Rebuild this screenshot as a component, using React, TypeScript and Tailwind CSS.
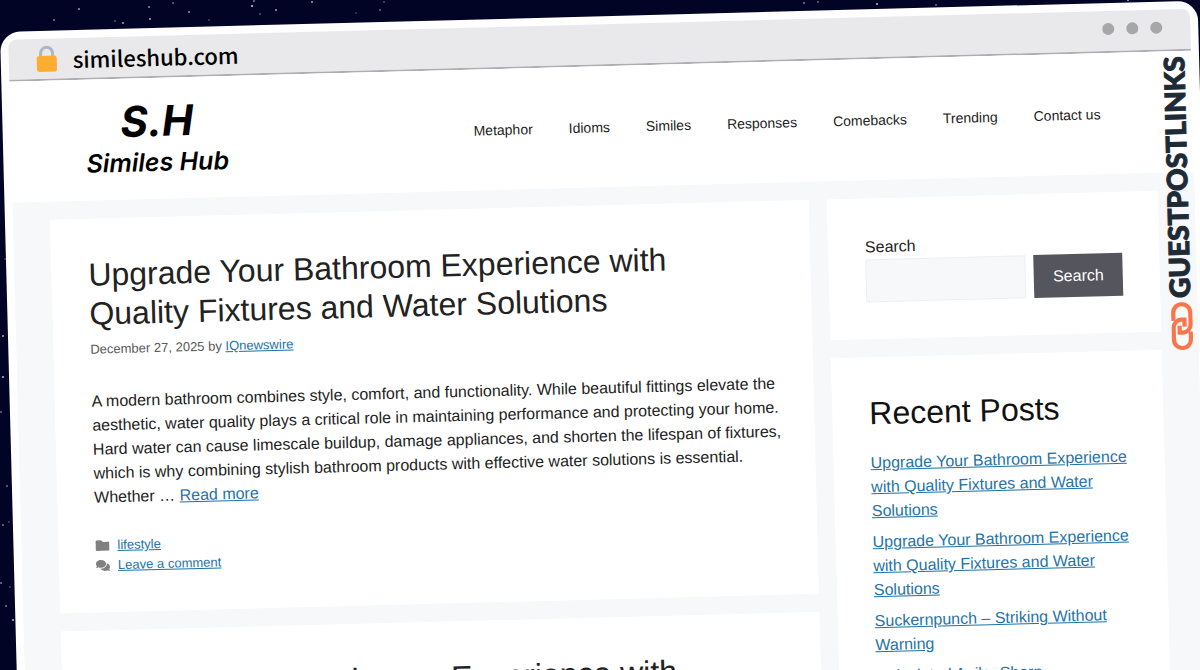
import { FaComments, FaFolder } from "react-icons/fa";

const navItems = ["Metaphor", "Idioms", "Similes", "Responses", "Comebacks", "Trending", "Contact us"];

const recentPosts = [
  "Upgrade Your Bathroom Experience with Quality Fixtures and Water Solutions",
  "Upgrade Your Bathroom Experience with Quality Fixtures and Water Solutions",
  "Suckernpunch – Striking Without Warning",
  "Articulated Agile, Sharp",
];

// x, y, radius, opacity
const stars = [
  [79, 9, 1, 0.7], [54, 20, 1, 0.6], [149, 7, 1, 0.7], [173, 3, 1, 0.5], [189, 12, 1, 0.7],
  [150, 19, 1, 0.8], [123, 23, 1, 0.8], [115, 21, 1, 0.4], [209, 20, 1, 0.3], [252, 6, 1, 1],
  [254, 1, 1, 0.6], [276, 10, 1, 0.8], [260, 14, 1, 0.4], [312, 2, 1, 0.8], [356, 13, 1, 0.3],
  [380, 10, 1, 0.5], [384, 2, 1, 0.4], [804, 3, 1, 0.6], [818, 2, 1, 0.5], [877, 4, 1, 0.9],
  [936, 5, 1, 0.5], [1128, 0, 1, 0.9], [3, 336, 1, 0.8], [3, 377, 1, 0.9], [1, 412, 1, 0.5],
  [7, 486, 1, 0.5], [3, 525, 1, 0.6], [9, 522, 1, 0.3], [1, 583, 1, 0.6], [10, 587, 1, 0.3],
  [6, 606, 1, 0.6], [13, 620, 1, 0.9], [5, 259, 1, 0.3],
];

function Starfield() {
  return (
    <svg aria-hidden="true" className="absolute inset-0 size-full">
      {stars.map(([x, y, r, o]) => (
        <circle key={`${x}-${y}`} cx={x} cy={y} r={r} fill="#c9cdf0" opacity={o} />
      ))}
    </svg>
  );
}

function LockIcon() {
  return (
    <svg aria-hidden="true" viewBox="0 0 22 28" className="h-7 w-[22px]">
      <path d="M5 13V8.500a6 6 0 0 1 12 0V13" fill="none" stroke="#aab8c2" strokeWidth="3" />
      <rect x="1" y="11" width="20" height="16" rx="2.500" fill="#ffac33" />
    </svg>
  );
}

function BrowserBar() {
  return (
    <div className="flex h-[42px] items-center rounded-t-lg border-b-2 border-[#adaeb2] bg-[#e9e9eb] pr-7 pl-[27px]">
      <LockIcon />
      <span className="ml-[15px] flex-1 font-['Noto_Sans_CJK_SC',sans-serif] text-[22px] leading-none font-medium text-black">
        simileshub.com
      </span>
      <div className="flex gap-3 pb-1">
        <span className="size-3 rounded-full bg-[#a6a7ab]" />
        <span className="size-3 rounded-full bg-[#a6a7ab]" />
        <span className="size-3 rounded-full bg-[#a6a7ab]" />
      </div>
    </div>
  );
}

function Header() {
  return (
    <header className="flex h-[121px] items-center justify-between bg-white pr-[92px] pl-[75px]">
      <a href="#" className="flex flex-col items-center pt-0.5 font-['Inter',sans-serif] text-black italic">
        <span className="text-[42px] leading-[44px] font-bold">S.H</span>
        <span className="text-[25px] leading-[38px] font-semibold">Similes Hub</span>
      </a>
      <nav className="flex gap-9 text-sm text-[#222222]">
        {navItems.map((item) => (
          <a key={item} href="#">
            {item}
          </a>
        ))}
      </nav>
    </header>
  );
}

function Article() {
  return (
    <article className="bg-white p-[37px]">
      <h2 className="pr-4 text-[32px] leading-[39px] text-[#222222]">
        <a href="#">Upgrade Your Bathroom Experience with Quality Fixtures and Water Solutions</a>
      </h2>
      <div className="mt-1.5 text-[13px] leading-5 text-[#595959]">
        December 27, 2025 by{" "}
        <a href="#" className="text-[#1e73a8] underline">
          IQnewswire
        </a>
      </div>
      <p className="mt-[30px] -mr-2 text-base text-[#222222]">
        A modern bathroom combines style, comfort, and functionality. While beautiful fittings elevate the
        aesthetic, water quality plays a critical role in maintaining performance and protecting your home. Hard
        water can cause limescale buildup, damage appliances, and shorten the lifespan of fixtures, which is why
        combining stylish bathroom products with effective water solutions is essential. Whether …{" "}
        <a href="#" className="text-[#1e73a8] underline">
          Read more
        </a>
      </p>
      <footer className="mt-[26px] text-[13px] leading-5 text-[#1e73a8]">
        <div className="flex items-center gap-2">
          <FaFolder className="size-3.5 text-[#808080]" />
          <a href="#" className="underline">
            lifestyle
          </a>
        </div>
        <div className="flex items-center gap-2">
          <FaComments className="size-3.5 text-[#808080]" />
          <a href="#" className="underline">
            Leave a comment
          </a>
        </div>
      </footer>
    </article>
  );
}

function Sidebar() {
  return (
    <aside className="flex w-[331px] shrink-0 flex-col gap-[18px]">
      <form className="bg-white p-[37px]" onSubmit={(e) => e.preventDefault()}>
        <label htmlFor="search" className="block text-base text-[#222222]">
          Search
        </label>
        <div className="flex h-[43px] gap-2">
          <input
            id="search"
            type="search"
            className="min-w-0 flex-1 border border-[#edf0f2] bg-[#f7f8f9] px-3 outline-none"
          />
          <button type="submit" className="bg-[#55555e] px-[19px] text-base text-white">
            Search
          </button>
        </div>
      </form>
      <section className="bg-white p-[37px]">
        <h2 className="mb-[18px] text-[32px] leading-[39px] text-[#111111]">Recent Posts</h2>
        <ul className="flex flex-col gap-[7px] text-base text-[#1e73a8]">
          {recentPosts.map((post, i) => (
            <li key={i}>
              <a href="#" className="underline">
                {post}
              </a>
            </li>
          ))}
        </ul>
      </section>
    </aside>
  );
}

function GuestPostLinks() {
  return (
    <div className="absolute top-[55px] right-2.5 flex flex-col items-center gap-1">
      <span className="rotate-180 pl-1 font-['Lato',sans-serif] text-[28px] leading-6 font-black text-[#1f2a37] [writing-mode:vertical-rl] [-webkit-text-stroke:1px_#1f2a37]">
        GUESTPOSTLINKS
      </span>
      <svg aria-hidden="true" viewBox="0 0 22 48" className="h-12 w-[22px]" fill="none" stroke="#f9754b" strokeWidth="4.200">
        <path d="M2.500 18.500V10.500a8.500 8.500 0 0 1 17 0v12a8 8 0 0 1-8 8h-3v-7" />
        <path d="M19.500 29.500v8a8.500 8.500 0 0 1-17 0v-12a8 8 0 0 1 8-8h3v7" />
      </svg>
    </div>
  );
}

export default function App() {
  return (
    <div className="relative h-screen overflow-hidden bg-[#020425] pt-8 pr-0.5 font-['Liberation_Sans',Arial,sans-serif]">
      <Starfield />
      <div className="relative w-full origin-top-left -rotate-[1.5deg] rounded-[20px] bg-white p-2">
        <BrowserBar />
        <Header />
        <main className="flex items-start gap-[18px] bg-[#f6f8f9] px-[37px] py-[18px]">
          <div className="flex min-w-0 flex-1 flex-col gap-[18px]">
            <Article />
            <Article />
          </div>
          <Sidebar />
        </main>
        <GuestPostLinks />
      </div>
    </div>
  );
}
